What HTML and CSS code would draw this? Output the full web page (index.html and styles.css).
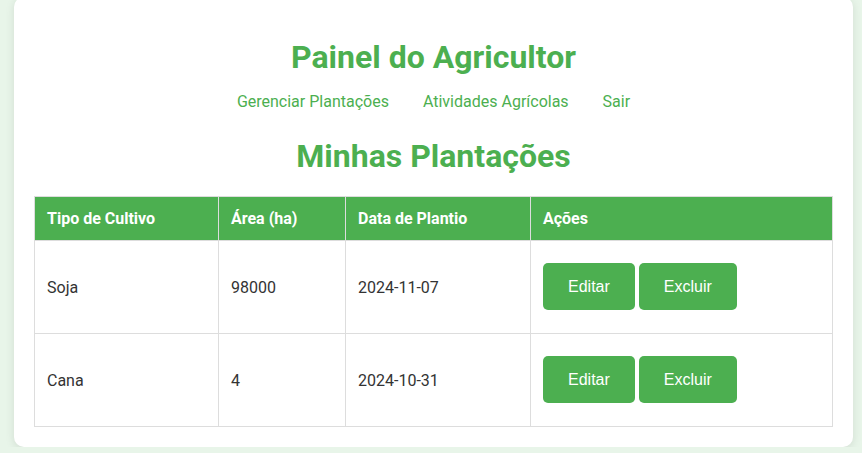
FILE: index.html
```html
<!DOCTYPE html>
<html lang="pt">
<head>
<meta charset="utf-8">
<title>Painel do Agricultor</title>
<link rel="stylesheet" href="styles.css">
</head>
<body>
<div class="card">
  <h1 class="title">Painel do Agricultor</h1>
  <nav class="nav">
    <a href="#">Gerenciar Plantações</a>
    <a href="#">Atividades Agrícolas</a>
    <a href="#">Sair</a>
  </nav>
  <h2 class="subtitle">Minhas Plantações</h2>
  <table class="tbl">
    <colgroup>
      <col class="c1"><col class="c2"><col class="c3"><col class="c4">
    </colgroup>
    <thead>
      <tr><th>Tipo de Cultivo</th><th>Área (ha)</th><th>Data de Plantio</th><th>Ações</th></tr>
    </thead>
    <tbody>
      <tr>
        <td>Soja</td><td>98000</td><td>2024-11-07</td>
        <td><div class="actions"><button class="btn">Editar</button><button class="btn">Excluir</button></div></td>
      </tr>
      <tr>
        <td>Cana</td><td>4</td><td>2024-10-31</td>
        <td><div class="actions"><button class="btn">Editar</button><button class="btn">Excluir</button></div></td>
      </tr>
    </tbody>
  </table>
</div>
</body>
</html>
```
FILE: styles.css
```css
html, body {
  margin: 0;
  padding: 0;
}
body {
  background: #e8f5e9;
  font-family: Roboto, "Liberation Sans", sans-serif;
  color: #333;
  overflow: hidden;
}
.card {
  box-sizing: border-box;
  width: 839px;
  margin: -3px 0 0 14px;
  padding: 20px;
  background: #fff;
  border-radius: 10px;
  box-shadow: 0 2px 10px rgba(0, 0, 0, 0.1);
}
.title {
  margin: 21px 0 16px;
  text-align: center;
  font-size: 32px;
  font-weight: 700;
  line-height: normal;
  color: #4caf50;
}
.nav {
  display: flex;
  justify-content: center;
  gap: 34px;
  font-size: 16px;
  line-height: 19px;
}
.nav a {
  color: #4caf50;
  text-decoration: none;
}
.subtitle {
  margin: 26px 0 21px;
  text-align: center;
  font-size: 32px;
  font-weight: 700;
  line-height: normal;
  color: #4caf50;
}
.tbl {
  width: 100%;
  border-collapse: collapse;
  font-size: 16px;
}
.c1 { width: 184px; }
.c2 { width: 127px; }
.c3 { width: 185px; }
.tbl th, .tbl td {
  border: 1px solid #ddd;
  padding: 12px;
  text-align: left;
  line-height: 19px;
}
.tbl th {
  background: #4caf50;
  color: #fff;
  font-weight: 700;
}
.tbl td {
  height: 68px;
}
.actions {
  display: flex;
  gap: 4px;
  margin-top: -1px;
}
.btn {
  font-family: "Liberation Sans", Arial, sans-serif;
  font-size: 16px;
  line-height: 17px;
  padding: 15px 25px;
  border: none;
  border-radius: 5px;
  background: #4caf50;
  color: #fff;
}
```
